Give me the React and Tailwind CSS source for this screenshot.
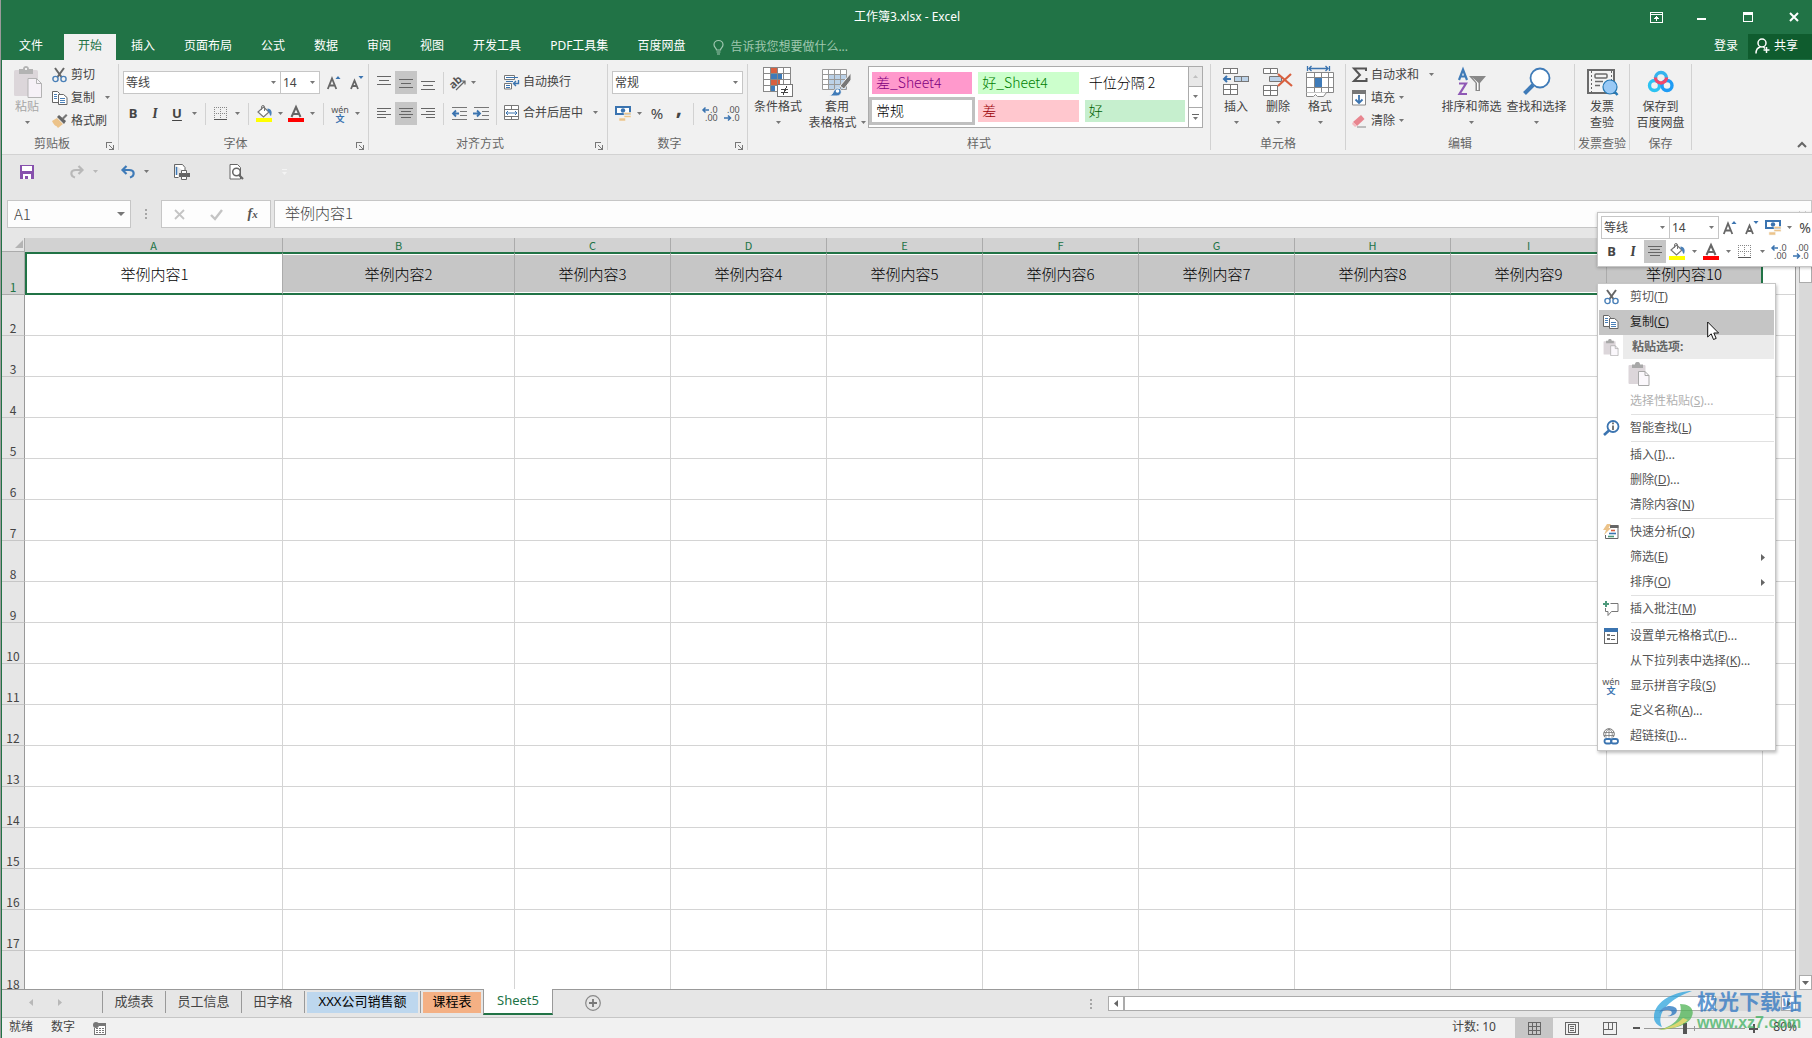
import { useState } from 'react';
import clsx from 'clsx';

/* ---------- icons ---------- */

const Svg = ({ w, h, crisp, className, children }) => (
  <svg
    width={w}
    height={h}
    viewBox={`0 0 ${w} ${h}`}
    fill="none"
    aria-hidden="true"
    shapeRendering={crisp ? 'crispEdges' : 'auto'}
    className={clsx('shrink-0 overflow-visible', className)}
  >
    {children}
  </svg>
);

const Caret = ({ className = 'fill-[#777]' }) => (
  <svg width="5" height="3" viewBox="0 0 5 3" aria-hidden="true" className={clsx('shrink-0', className)}>
    <path d="M0 0h5L2.500 3z" />
  </svg>
);

const PasteIcon = () => (
  <Svg w={29} h={32}>
    <rect x="1" y="4" width="24" height="26" rx="1.500" fill="#dcd6da" />
    <path d="M6 3h4c0-4 6-4 6 0h4v5H6z" fill="#b3b3b3" />
    <rect x="12" y="2" width="2" height="2" fill="#f1f1f1" />
    <path d="M15 12.500h8.500l5 5v14H15z" fill="#f6f1f7" stroke="#b3b3b3" />
    <path d="M23.500 12.500v5h5" stroke="#b3b3b3" />
  </Svg>
);

const SmallPasteIcon = ({ big }) => (
  <svg width={big ? 22 : 16} height={big ? 24 : 17} viewBox="0 0 22 24" fill="none" aria-hidden="true">
    <rect x="0.500" y="3" width="17" height="19" rx="1" fill="#dcd6da" />
    <path d="M4 2.500h3c0-3.500 5-3.500 5 0h3V6H4z" fill="#a8a8a8" />
    <path d="M10.500 9.500h6.500l4 4V23.500H10.500z" fill="#fbf8fc" stroke="#a8a8a8" />
    <path d="M17 9.500v4h4" stroke="#a8a8a8" />
  </svg>
);

const CutIcon = () => (
  <Svg w={15} h={16}>
    <path d="M3 1l6.500 9M12 1L5.500 10" stroke="#666" strokeWidth="2" />
    <circle cx="3.500" cy="12" r="2.600" stroke="#4a80b8" strokeWidth="1.400" />
    <circle cx="11.500" cy="12" r="2.600" stroke="#4a80b8" strokeWidth="1.400" />
  </Svg>
);

const CopyIcon = () => (
  <Svg w={16} h={16}>
    <path d="M.5 1.500h5l2 2v9h-7z" fill="#fff" stroke="#666" />
    <path d="M2 4.500h3M2 6.500h3M2 8.500h3" stroke="#4a80b8" />
    <path d="M6.500 4.500h5l3.500 3v7H6.500z" fill="#fff" stroke="#666" />
    <path d="M8 8.500h5M8 10.500h5M8 12.500h5" stroke="#4a80b8" />
  </Svg>
);

const BrushIcon = () => (
  <Svg w={16} h={16}>
    <path d="M0 8l5-3 6 6-5 4c-1-1-1-2-2-2S1 10 0 8z" fill="#ecc38a" />
    <path d="M5 4l2-2 7 6-2 3z" fill="#666" />
    <path d="M10 5l4-4 1.500 1.500-4 4z" fill="#777" />
  </Svg>
);

const GrowFont = ({ down }) => (
  <Svg w={14} h={16}>
    <path
      d={down ? 'M1 14L4.500 5.500L8 14M2.500 11h4.500' : 'M.8 14L5 3.500L9.300 14M2.500 10.500h5'}
      stroke="#666"
      strokeWidth="1.800"
    />
    <path d={down ? 'M8.500 1h5L11 4z' : 'M8.500 4h5L11 1z'} fill="#3b74b0" />
  </Svg>
);

const BordersIcon = () => (
  <Svg w={14} h={14} crisp>
    <path d="M0 .5h13M0 6.500h13M.5 0v12M6.500 0v12M12.500 0v12" stroke="#888" strokeDasharray="1 1" />
    <path d="M0 12.500h13" stroke="#555" />
  </Svg>
);

const FillIcon = () => (
  <Svg w={16} h={17}>
    <path d="M7.500 2L13 7l-5.500 5L2 7z" fill="#fff" stroke="#777" strokeWidth="1.200" />
    <path d="M5.500 5V2a1.500 1.500 0 013 0v4" stroke="#777" />
    <path d="M11.500 3.500c4 .5 5 3.500 3.500 7.500-2-1-1-4-3.500-5z" fill="#4a80b8" />
    <path d="M0 13h16v4H0z" fill="#ff0" />
  </Svg>
);

const FontColorIcon = () => (
  <Svg w={16} h={17}>
    <path d="M3.500 12L8 2l4.500 10M5 9h6" stroke="#666" strokeWidth="2" />
    <path d="M0 13h16v4H0z" fill="#f00" />
  </Svg>
);

const PinyinIcon = () => (
  <span className="flex flex-col items-center text-[9px] leading-[9px] text-[#555]">
    <span>wén</span>
    <span className="font-bold text-[#3b74b0]">文</span>
  </span>
);

const LINES = {
  top: [[0, 14, 1], [2, 12, 5], [0, 14, 9]],
  middle: [[0, 14, 4], [2, 12, 8], [0, 14, 12]],
  bottom: [[0, 14, 6], [2, 12, 10], [0, 14, 14]],
  left: [[0, 14, 2], [0, 9, 5], [0, 14, 8], [0, 9, 11]],
  center: [[0, 14, 2], [2, 12, 5], [0, 14, 8], [2, 12, 11]],
  right: [[0, 14, 2], [5, 14, 5], [0, 14, 8], [5, 14, 11]],
};

const AlignIcon = ({ kind }) => (
  <Svg w={14} h={16} crisp>
    {LINES[kind].map(([a, b, y]) => (
      <path key={y} d={`M${a} ${y + 0.5}H${b}`} stroke="#666" />
    ))}
  </Svg>
);

const IndentIcon = ({ out }) => (
  <Svg w={17} h={14}>
    <path d="M1 .5h15M9 4.500h7M9 8.500h7M1 12.500h15" stroke="#777" />
    <path d={out ? 'M2 6.500h6M5 3.500l-3 3 3 3' : 'M0 6.500h6M4 3.500l3 3-3 3'} stroke="#3b74b0" strokeWidth="1.800" />
  </Svg>
);

const OrientationIcon = () => (
  <Svg w={17} h={16}>
    <text x="0" y="11" transform="rotate(-42 6 9)" fontSize="11" fill="#555" fontWeight="bold">ab</text>
    <path d="M6 15l9-9M11.500 6H15v3.500" stroke="#666" strokeWidth="1.200" />
  </Svg>
);

const WrapIcon = () => (
  <Svg w={16} h={16}>
    <path d="M.5 1.500h10v4H.5zM.5 9.500h7v5.500H.5z" fill="#fff" stroke="#777" />
    <path d="M2 3.500h12M2 7.500h7M2 11.500h4M2 13.500h4" stroke="#3b74b0" />
    <path d="M14.500 6v3.500H10M12 7l-2.500 2.500L12 12" stroke="#3b74b0" strokeWidth="1.400" />
  </Svg>
);

const MergeIcon = () => (
  <Svg w={16} h={16}>
    <path d="M.5.500h14v14H.5zM.5 4.500h14M.5 11.500h14M7.500.500v4M7.500 11.500v3" fill="#fff" stroke="#777" />
    <path d="M2 8h11M4 6L2 8l2 2M11 6l2 2-2 2" stroke="#3b74b0" />
  </Svg>
);

const CurrencyIcon = () => (
  <Svg w={17} h={17}>
    <path d="M0 1h16v9H0z" fill="#3b74b0" />
    <path d="M2 3h12v5H2z" fill="#fff" />
    <circle cx="8" cy="5.500" r="2.200" fill="#3b74b0" />
    <path d="M9 7.500h7v2H9zM9 10.500h7v2H9zM4 13h6.500v3H4z" fill="#ecc38a" stroke="#f6f1ea" strokeWidth=".6" />
  </Svg>
);

const DecimalIcon = ({ dec }) => (
  <Svg w={16} h={16}>
    <text x={dec ? 3 : 8} y="7" fontSize="9" fill="#555">{dec ? '.00' : '.0'}</text>
    <text x={dec ? 8 : 3} y="15" fontSize="9" fill="#555">{dec ? '.0' : '.00'}</text>
    <path
      d={dec ? 'M0 12h6M4 9.500L6.500 12 4 14.500' : 'M1 4h6M3.500 1.500L1 4l2.500 2.500'}
      stroke="#3b74b0"
      strokeWidth="1.500"
    />
  </Svg>
);

const CondFormatIcon = () => (
  <Svg w={30} h={30} crisp>
    <path d="M.5.500h27v24H.5z" fill="#fff" />
    <path d="M8 1h6v5H8zM8 13h9v5H8z" fill="#d8603f" />
    <path d="M8 7h11v5H8zM8 19h4v5H8z" fill="#3f7bb8" />
    <path d="M.5.500h27v24H.5zM.5 6.500h27M.5 12.500h27M.5 18.500h27M7.500.500v24M14.500.500v24M20.500.500v24" stroke="#888" />
    <path d="M14.500 17.500h15v12h-15z" fill="#fff" stroke="#777" />
    <path d="M18 22.500h7M18 25.500h7M24 19l-4 9" stroke="#444" />
  </Svg>
);

const TableFormatIcon = () => (
  <Svg w={30} h={30}>
    <path d="M.5 2.500h24v20H.5z" fill="#fff" />
    <path d="M7 8h17v14H7z" fill="#bcd2e8" />
    <path d="M.5 2.500h24v20H.5zM.5 7.500h24M.5 12.500h24M.5 17.500h24M6.500 2.500v20M12.500 2.500v20M18.500 2.500v20" stroke="#999" />
    <path d="M29 6v7l-7 9-4-3z" fill="#777" stroke="#f1f1f1" />
    <path d="M7 29c5-1 4-8 9-8 5 1 4 8-1 8z" fill="#3f7bb8" stroke="#f1f1f1" />
    <circle cx="15.500" cy="24" r="1.800" fill="#fff" />
  </Svg>
);

const InsertCellsIcon = () => (
  <Svg w={28} h={30} crisp>
    <path d="M1.500 1.500h14v5h-14zM8.500 1.500v5M1.500 17.500h14v10h-14zM8.500 17.500v10M1.500 22.500h14" fill="#fff" stroke="#777" />
    <path d="M12.500 9.500h14v5h-14zM19.500 9.500v5" fill="#bcd2e8" stroke="#777" />
    <path d="M2 12h7M5 9l-3 3 3 3" stroke="#3b74b0" strokeWidth="2" shapeRendering="auto" />
  </Svg>
);

const DeleteCellsIcon = () => (
  <Svg w={30} h={30}>
    <path d="M.5 1.500h14v5H.5zM7.500 1.500v5M.5 18.500h14v10H.5zM7.500 18.500v10M.5 23.500h14" fill="#fff" stroke="#777" />
    <path d="M6.500 9.500h12v5h-12z" fill="#bcd2e8" stroke="#777" />
    <path d="M15 7l14 12M28 7L15 19" stroke="#d8603f" strokeWidth="2.200" />
  </Svg>
);

const FormatCellsIcon = () => (
  <Svg w={29} h={32}>
    <path d="M1.500 0v5M23.500 0v5M3 2.500h19M5.500 0L3 2.500 5.500 5M19.500 0L22 2.500 19.500 5" stroke="#3b74b0" strokeWidth="1.300" />
    <path d="M.5 6.500h27v20H.5zM.5 11.500h27M.5 21.500h27M8.500 6.500v20M15.500 6.500v20M22.500 6.500v20" fill="#fff" stroke="#888" />
    <path d="M9 12h7v9H9z" fill="#3f7bb8" />
    <path d="M.5 26.500v4h7l2-2 2 2h6l3-4" fill="#fff" stroke="#888" />
  </Svg>
);

const FillDownIcon = () => (
  <Svg w={14} h={16}>
    <path d="M.5 1h13v14H.5z" fill="#fff" stroke="#888" />
    <path d="M0 0h14v4H0z" fill="#777" />
    <path d="M7 5v8M3.500 9.500L7 13l3.500-3.500" stroke="#3b74b0" strokeWidth="1.800" />
  </Svg>
);

const SigmaIcon = () => (
  <Svg w={16} h={16}>
    <path d="M14 4V1.500H2l6 6.500-6 6h12.500V11" stroke="#555" strokeWidth="2" />
  </Svg>
);

const EraserIcon = () => (
  <Svg w={15} h={14}>
    <path d="M1 8l8-7 3.500 4L5 12z" fill="#e8858f" />
    <path d="M1 8l4 4-2 1L0 10z" fill="#f3b9bf" />
    <path d="M5 13h9" stroke="#888" />
  </Svg>
);

const SortIcon = () => (
  <Svg w={30} h={30}>
    <path d="M2 13L6 2.500 10 13M3.500 9.500h5" stroke="#3f7bb8" strokeWidth="2.200" />
    <path d="M2 16.500h7L2.500 27H10" stroke="#8f59b5" strokeWidth="2.200" />
    <path d="M12 9h17l-6 7v8h-4.500v-8z" fill="#888" />
    <path d="M15 10l5 6v7h1.500v-7z" fill="#fff" />
  </Svg>
);

const FindIcon = () => (
  <Svg w={30} h={30}>
    <circle cx="18" cy="11" r="9.500" fill="#fff" stroke="#3f7bb8" strokeWidth="1.800" />
    <path d="M11 18L2.500 26.500" stroke="#3f7bb8" strokeWidth="4" />
  </Svg>
);

const InvoiceIcon = () => (
  <Svg w={31} h={28}>
    <path d="M1 2h26v23H1z" fill="#f4f4f4" stroke="#6b6b6b" strokeWidth="2" />
    <path d="M4.500 3v22M24.500 3v10" stroke="#666" strokeDasharray="2 2" />
    <rect x="8" y="6" width="12" height="4" rx="1" stroke="#6b6b6b" strokeWidth="1.500" />
    <path d="M8 13.500h8M8 17.500h5" stroke="#6b6b6b" strokeWidth="1.500" />
    <path d="M27 23l3.500 4" stroke="#2478b5" strokeWidth="2.500" />
    <circle cx="23" cy="19" r="7" fill="#99c9f5" stroke="#2478b5" strokeWidth="1.200" />
  </Svg>
);

const NetdiskIcon = () => (
  <Svg w={28} h={24}>
    <circle cx="7.500" cy="15.500" r="5" stroke="#2cc3f2" strokeWidth="3.400" />
    <circle cx="20" cy="15.500" r="5" stroke="#1f9cf5" strokeWidth="3.400" />
    <path d="M8.500 8a5.500 5.500 0 0111 0" stroke="#35b4ee" strokeWidth="3.400" />
    <path d="M8.500 7.500a5.500 5.500 0 0011 0" stroke="#f2476a" strokeWidth="3.400" />
  </Svg>
);

const LauncherIcon = () => (
  <Svg w={8} h={8} crisp>
    <path d="M.5 6V.5H6M3 3l4 4M7.500 3v4.500H3" stroke="#777" />
  </Svg>
);

const LookupIcon = () => (
  <Svg w={17} h={16}>
    <circle cx="10" cy="6.500" r="5.500" fill="#fff" stroke="#3b74b0" strokeWidth="1.800" />
    <path d="M6 10.500L1 15" stroke="#3b74b0" strokeWidth="2.600" />
    <path d="M10 5.500v4.500M10 2.500v1.800" stroke="#555" strokeWidth="1.600" />
  </Svg>
);

const QuickIcon = () => (
  <Svg w={16} h={16}>
    <path d="M7 1.500h8v13H2.500V11" fill="#fff" stroke="#666" />
    <path d="M7 1h8.500v3H7z" fill="#666" />
    <path d="M4 0h4L5.500 4H8L1 11l2-5H0z" fill="#ecc38a" />
    <path d="M8 6.500h4" stroke="#d8603f" strokeWidth="1.600" />
    <path d="M6 9.500h7" stroke="#3b74b0" strokeWidth="1.600" />
    <path d="M5 12.500h6" stroke="#4e9a7c" strokeWidth="1.600" />
  </Svg>
);

const CommentIcon = () => (
  <Svg w={16} h={16}>
    <path d="M7.500 2.500H15v8H8.500l-3.500 4v-4H2.500V7" fill="#fff" stroke="#777" />
    <path d="M3 0v6M0 3h6" stroke="#4e9a7c" strokeWidth="2" />
  </Svg>
);

const FormatDialogIcon = () => (
  <Svg w={14} h={16} crisp>
    <path d="M.5.500h13v15H.5z" fill="#fff" stroke="#666" />
    <path d="M0 0h14v4H0z" fill="#3b74b0" />
    <path d="M3 6h3v2H3zM3 10h3v2H3z" fill="#777" />
    <path d="M7 7.500h4M7 11.500h4" stroke="#666" />
  </Svg>
);

const LinkIcon = () => (
  <Svg w={16} h={17}>
    <circle cx="6" cy="6" r="5.300" fill="#fff" stroke="#777" />
    <path d="M6 1v9M1 4.500h10M1 7.500h10M3.500 10c-1.500-3-1-7 2.500-9 3.500 2 4 6 2.500 9" stroke="#777" strokeWidth=".8" />
    <path d="M0 9.500h16V17H0z" fill="#fff" />
    <rect x="1.500" y="11" width="7" height="4.500" rx="2.200" stroke="#3b74b0" strokeWidth="1.800" />
    <rect x="8" y="11" width="7" height="4.500" rx="2.200" stroke="#3b74b0" strokeWidth="1.800" />
  </Svg>
);

/* ---------- small controls ---------- */

const IconButton = ({ label, className, children }) => (
  <button type="button" aria-label={label} className={clsx('flex h-[23px] shrink-0 items-center justify-center', className)}>
    {children}
  </button>
);

const CaretButton = ({ label, className = 'w-3' }) => (
  <IconButton label={`${label}选项`} className={className}>
    <Caret />
  </IconButton>
);

const Combo = ({ label, value, className }) => (
  <label className={clsx('flex h-[23px] shrink-0 items-center border border-[#c6c6c6] bg-white pr-1', className)}>
    <select aria-label={label} defaultValue={value} className="w-full min-w-0 appearance-none bg-transparent pl-0.5 text-[12px] text-[#444] outline-none">
      <option>{value}</option>
    </select>
    <Caret />
  </label>
);

const Sep = ({ className = 'mx-[5px] bg-[#d2d2d2]' }) => <span className={clsx('h-[22px] w-px shrink-0', className)} />;

const Group = ({ title, launcher, className, children }) => (
  <section className={clsx('flex h-[86px] shrink-0 flex-col border-r border-[#d2d2d2]', className)}>
    <div className="flex h-[69px]">{children}</div>
    <div className="flex h-[17px] items-start pt-1">
      <h2 className="flex-1 text-center text-[12px] leading-[13px] whitespace-nowrap text-[#666]">{title}</h2>
      {launcher && (
        <button type="button" aria-label={`${title}设置`} className="flex w-4 justify-center pt-[5px]">
          <LauncherIcon />
        </button>
      )}
    </div>
  </section>
);

const BigButton = ({ icon, lines, caret, className }) => (
  <button type="button" className={clsx('flex shrink-0 flex-col items-center text-[12px] leading-[15px] whitespace-nowrap', className)}>
    <span className="flex h-[35px] items-center justify-center">{icon}</span>
    <span>{lines[0]}</span>
    <span className="flex h-4 items-center gap-1">
      {lines[1]}
      {caret && <Caret />}
    </span>
  </button>
);

const SmallButton = ({ icon, caret, children }) => (
  <button type="button" className="flex h-[23px] items-center pb-0.5 text-[12px] whitespace-nowrap">
    <span className="flex w-[19px] justify-start">{icon}</span>
    {children}
    {caret && <span className={caret}><Caret /></span>}
  </button>
);

/* ---------- page sections ---------- */

const TABS = ['开始', '插入', '页面布局', '公式', '数据', '审阅', '视图', '开发工具', 'PDF工具集', '百度网盘'];

function TitleBar() {
  return (
    <header className="grid h-[34px] shrink-0 grid-cols-[1fr_auto_1fr] items-center bg-[#217346] text-white">
      <span />
      <h1 className="text-[12px]">工作簿3.xlsx - Excel</h1>
      <div className="flex justify-end gap-2.5">
        <button type="button" aria-label="功能区显示选项" className="flex h-8 w-9 items-center justify-center">
          <Svg w={13} h={11} crisp>
            <path d="M.5.500h12v10H.5zM.5 2.500h12M6.500 4v5M4 6.500h5M5 5.500h3" stroke="#fff" />
          </Svg>
        </button>
        <button type="button" aria-label="最小化" className="flex h-8 w-9 items-center justify-center">
          <Svg w={10} h={10} crisp><path d="M0 6h9v2H0z" fill="#fff" /></Svg>
        </button>
        <button type="button" aria-label="最大化" className="flex h-8 w-9 items-center justify-center">
          <Svg w={10} h={10} crisp><path d="M.5.500h9v9h-9zM0 2h10M0 1h10" stroke="#fff" /></Svg>
        </button>
        <button type="button" aria-label="关闭" className="flex h-8 w-9 items-center justify-center">
          <Svg w={10} h={10}><path d="M1 1l8 8M9 1L1 9" stroke="#fff" strokeWidth="2" /></Svg>
        </button>
      </div>
    </header>
  );
}

function TabBar() {
  return (
    <nav className="flex h-[26px] shrink-0 items-stretch bg-[#217346] text-[12px] text-white">
      <button type="button" className="w-[62px] pr-2 pb-0.5 pl-1">文件</button>
      <div className="flex gap-px">
        {TABS.map((tab, i) => (
          <button key={tab} type="button" className={clsx('px-3.5 pb-0.5 whitespace-nowrap', i === 0 && 'bg-[#f1f1f1] text-[#217346]')}>
            {tab}
          </button>
        ))}
      </div>
      <label className="ml-3.5 flex flex-1 items-center gap-1.5">
        <Svg w={11} h={15}>
          <path d="M3.500 10C3.500 8 1 7.500 1 4.700a4.500 4.200 0 019 0C10 7.500 7.500 8 7.500 10zM3.500 12h4M4 14h3" stroke="#9fc7af" strokeWidth="1.200" />
        </Svg>
        <input aria-label="操作说明搜索" placeholder="告诉我您想要做什么..." className="w-40 bg-transparent outline-none placeholder:text-[#9fc7af]" />
      </label>
      <button type="button" className="px-2.5 pb-0.5">登录</button>
      <button type="button" className="flex h-[25px] w-16 items-center gap-1 bg-[#0f5c2e] pb-0.5 pl-[7px]">
        <Svg w={15} h={16}>
          <circle cx="7" cy="5" r="4" stroke="#fff" strokeWidth="1.500" />
          <path d="M1 15.500c0-4 2-6 4.500-6.500M8.500 9l1.500 1.500M11.500 9v6M8.500 12h6" stroke="#fff" strokeWidth="1.500" />
        </Svg>
        共享
      </button>
    </nav>
  );
}

const STYLES = [
  { name: '差_Sheet4', cls: 'bg-[#ff99cc] text-[#800080]' },
  { name: '好_Sheet4', cls: 'bg-[#ccffcc] text-[#008000]' },
  { name: '千位分隔 2', cls: 'bg-white text-black' },
  { name: '常规', cls: 'bg-white text-black outline-3 outline-[#c0c0c0]' },
  { name: '差', cls: 'bg-[#ffc7ce] text-[#9c0006]' },
  { name: '好', cls: 'bg-[#c6efce] text-[#006100]' },
];

function Ribbon() {
  return (
    <div className="flex h-[95px] shrink-0 border-b border-[#d2d2d2] bg-[#f1f1f1] pt-1 text-[#444]">
      <Group title="剪贴板" launcher className="w-[117px]">
        <BigButton icon={<PasteIcon />} lines={[<span className="text-[#a6a6a6]">粘贴</span>, '']} caret className="w-[50px]" />
        <div>
          <SmallButton icon={<CutIcon />}>剪切</SmallButton>
          <SmallButton icon={<CopyIcon />} caret="ml-2.5">复制</SmallButton>
          <SmallButton icon={<BrushIcon />}>格式刷</SmallButton>
        </div>
      </Group>

      <Group title="字体" launcher className="w-[250px]">
        <div className="flex flex-col gap-2 pt-[7px] pl-[3px]">
          <div className="flex pl-px">
            <Combo label="字体" value="等线" className="w-[158px]" />
            <Combo label="字号" value="14" className="-ml-px w-10" />
            <IconButton label="增大字号" className="ml-0.5 w-[23px]"><GrowFont /></IconButton>
            <IconButton label="减小字号" className="w-[23px]"><GrowFont down /></IconButton>
          </div>
          <div className="flex items-center">
            <IconButton label="加粗" className="w-[22px] text-[13px] font-bold">B</IconButton>
            <IconButton label="倾斜" className="w-[22px] font-serif text-[14px] font-bold italic">I</IconButton>
            <IconButton label="下划线" className="w-[22px] text-[13px] font-bold underline underline-offset-2">U</IconButton>
            <CaretButton label="下划线" />
            <Sep />
            <IconButton label="边框" className="w-5"><BordersIcon /></IconButton>
            <CaretButton label="边框" />
            <Sep />
            <IconButton label="填充颜色" className="w-5"><FillIcon /></IconButton>
            <CaretButton label="填充颜色" />
            <IconButton label="字体颜色" className="w-5"><FontColorIcon /></IconButton>
            <CaretButton label="字体颜色" />
            <Sep />
            <IconButton label="拼音" className="w-[22px]"><PinyinIcon /></IconButton>
            <CaretButton label="拼音" />
          </div>
        </div>
      </Group>

      <Group title="对齐方式" launcher className="w-[239px]">
        <div className="flex flex-col gap-2 pt-[7px] pl-1">
          <div className="flex items-center">
            <IconButton label="顶端对齐" className="w-[22px]"><AlignIcon kind="top" /></IconButton>
            <IconButton label="垂直居中" className="w-[22px] bg-[#c6c6c6]"><AlignIcon kind="middle" /></IconButton>
            <IconButton label="底端对齐" className="w-[22px]"><AlignIcon kind="bottom" /></IconButton>
            <Sep className="mx-1 bg-[#d2d2d2]" />
            <IconButton label="方向" className="w-5"><OrientationIcon /></IconButton>
            <CaretButton label="方向" className="w-2.5" />
          </div>
          <div className="flex items-center">
            <IconButton label="左对齐" className="w-[22px]"><AlignIcon kind="left" /></IconButton>
            <IconButton label="居中" className="w-[22px] bg-[#c6c6c6]"><AlignIcon kind="center" /></IconButton>
            <IconButton label="右对齐" className="w-[22px]"><AlignIcon kind="right" /></IconButton>
            <Sep className="mx-1 bg-[#d2d2d2]" />
            <IconButton label="减少缩进量" className="w-[22px]"><IndentIcon out /></IconButton>
            <IconButton label="增加缩进量" className="w-[22px]"><IndentIcon /></IconButton>
          </div>
        </div>
        <span className="mt-1.5 ml-1 h-[55px] w-px bg-[#d2d2d2]" />
        <div className="flex flex-col gap-2 pt-[7px] pl-[7px]">
          <SmallButton icon={<WrapIcon />}>自动换行</SmallButton>
          <SmallButton icon={<MergeIcon />} caret="ml-2.5">合并后居中</SmallButton>
        </div>
      </Group>

      <Group title="数字" launcher className="w-[140px]">
        <div className="flex flex-col gap-2 pt-[7px] pl-1">
          <Combo label="数字格式" value="常规" className="w-[131px]" />
          <div className="flex items-center">
            <IconButton label="会计数字格式" className="w-[22px]"><CurrencyIcon /></IconButton>
            <CaretButton label="会计数字格式" className="w-2.5" />
            <IconButton label="百分比样式" className="w-[26px] text-[15px]">%</IconButton>
            <IconButton label="千位分隔样式" className="w-[18px] pb-3.5 text-[22px] font-bold">,</IconButton>
            <Sep />
            <IconButton label="增加小数位数" className="w-[22px]"><DecimalIcon /></IconButton>
            <IconButton label="减少小数位数" className="w-[22px]"><DecimalIcon dec /></IconButton>
          </div>
        </div>
      </Group>

      <Group title="样式" className="w-[463px]">
        <BigButton icon={<CondFormatIcon />} lines={['条件格式', '']} caret className="ml-[5px] w-[50px]" />
        <BigButton icon={<TableFormatIcon />} lines={['套用', '表格格式']} caret className="ml-[3px] w-[62px]" />
        <div className="mt-0.5 flex h-[62px] w-[335px] border border-[#ababab] bg-white">
          <div className="grid flex-1 grid-cols-3 content-start gap-1.5 px-[3px] pt-[5px]">
            {STYLES.map((s) => (
              <button key={s.name} type="button" className={clsx("h-[22px] px-1 pb-0.5 text-left font-['Noto_Sans_CJK_SC',sans-serif] text-[14px] leading-5 font-light whitespace-nowrap", s.cls)}>
                {s.name}
              </button>
            ))}
          </div>
          <div className="flex w-3.5 flex-col divide-y divide-[#ababab] border-l border-[#ababab]">
            <button type="button" aria-label="上一行" className="flex flex-1 items-center justify-center bg-[#e8e8e8]">
              <Caret className="rotate-180 fill-[#c0c0c0]" />
            </button>
            <button type="button" aria-label="下一行" className="flex flex-1 items-center justify-center"><Caret /></button>
            <button type="button" aria-label="其他样式" className="flex flex-1 flex-col items-center justify-center gap-0.5">
              <span className="h-px w-[7px] bg-[#666]" />
              <Caret />
            </button>
          </div>
        </div>
      </Group>

      <Group title="单元格" className="w-[135px]">
        <BigButton icon={<InsertCellsIcon />} lines={['插入', '']} caret className="ml-1 w-[42px]" />
        <BigButton icon={<DeleteCellsIcon />} lines={['删除', '']} caret className="w-[42px]" />
        <BigButton icon={<FormatCellsIcon />} lines={['格式', '']} caret className="w-[42px]" />
      </Group>

      <Group title="编辑" className="w-[229px]">
        <div className="ml-1.5 w-[87px]">
          <SmallButton icon={<SigmaIcon />} caret="ml-2.5">自动求和</SmallButton>
          <SmallButton icon={<FillDownIcon />} caret="ml-1">填充</SmallButton>
          <SmallButton icon={<EraserIcon />} caret="ml-1">清除</SmallButton>
        </div>
        <BigButton icon={<SortIcon />} lines={['排序和筛选', '']} caret className="w-[65px]" />
        <BigButton icon={<FindIcon />} lines={['查找和选择', '']} caret className="w-[65px]" />
      </Group>

      <Group title="发票查验" className="w-[55px]">
        <BigButton icon={<InvoiceIcon />} lines={['发票', '查验']} className="w-full" />
      </Group>

      <Group title="保存" className="w-[62px]">
        <BigButton icon={<NetdiskIcon />} lines={['保存到', '百度网盘']} className="w-full" />
      </Group>

      <div className="flex flex-1 items-end justify-end pr-[5px] pb-1.5">
        <button type="button" aria-label="折叠功能区">
          <Svg w={10} h={6}><path d="M1 5l4-4 4 4" stroke="#666" strokeWidth="2" /></Svg>
        </button>
      </div>
    </div>
  );
}

function QuickAccess() {
  return (
    <div className="flex h-[33px] shrink-0 items-center pl-[15px]">
      <IconButton label="保存" className="w-5">
        <Svg w={14} h={14} crisp>
          <path d="M0 0h14v14H0z" fill="#8751ad" />
          <path d="M2 1h10v5H2zM3 9h8v5H3z" fill="#fff" />
          <path d="M5 11h3v3H5z" fill="#8751ad" />
        </Svg>
      </IconButton>
      <IconButton label="恢复" className="ml-[30px] w-5">
        <Svg w={14} h={14}>
          <path d="M8.500 1l4 4-4 4M12 5H6C0 5 0 11 5 12.500" stroke="#b8b8b8" strokeWidth="2.200" />
        </Svg>
      </IconButton>
      <IconButton label="恢复选项" className="ml-0.5 w-3"><Caret className="fill-[#b8b8b8]" /></IconButton>
      <IconButton label="撤消" className="ml-[17px] w-5">
        <Svg w={14} h={14}>
          <path d="M5.500 1l-4 4 4 4M2 5h6c6 0 6 6 1 7.500" stroke="#3f7bb8" strokeWidth="2.200" />
        </Svg>
      </IconButton>
      <CaretButton label="撤消" className="ml-0.5 w-3" />
      <IconButton label="快速打印" className="ml-5 w-5">
        <Svg w={16} h={16}>
          <path d="M.5.500h8l2.500 3V8M.5.500v13h4" fill="#fff" stroke="#666" />
          <path d="M2.500 3v8" stroke="#3f7bb8" strokeWidth="1.500" />
          <path d="M5 9h11v4H5z" fill="#666" />
          <path d="M7.500 6.500h5v3h-5zM7.500 12.500h5v3h-5z" fill="#fff" stroke="#666" />
        </Svg>
      </IconButton>
      <IconButton label="打印预览" className="ml-[34px] w-5">
        <Svg w={15} h={16}>
          <path d="M1 .5h7.500l3 3V15H1z" fill="#fff" stroke="#666" />
          <circle cx="7.500" cy="8" r="3.800" fill="#fff" stroke="#666" strokeWidth="1.500" />
          <path d="M10 11l4 4" stroke="#666" strokeWidth="2.200" />
        </Svg>
      </IconButton>
      <IconButton label="自定义快速访问工具栏" className="ml-7 w-5">
        <span className="flex flex-col items-center gap-0.5">
          <span className="h-px w-[5px] bg-[#f4f4f4]" />
          <Caret className="fill-[#f4f4f4]" />
        </span>
      </IconButton>
    </div>
  );
}

function FormulaBar() {
  return (
    <div className="mt-3 flex h-7 shrink-0 pl-[5px] text-[#444]">
      <label className="flex w-[124px] items-center border border-[#c6c6c6] bg-[#fdfdfd] pr-[5px]">
        <input aria-label="名称框" defaultValue="A1" className="h-full w-full min-w-0 bg-transparent pb-0.5 pl-1.5 font-['Noto_Sans_CJK_SC',sans-serif] text-[15px] font-light outline-none" />
        <svg width="8" height="4" viewBox="0 0 8 4" className="shrink-0 fill-[#777]" aria-hidden="true"><path d="M0 0h8L4 4z" /></svg>
      </label>
      <span className="flex w-[30px] flex-col items-center justify-center gap-0.5">
        <span className="size-0.5 bg-[#a6a6a6]" />
        <span className="size-0.5 bg-[#a6a6a6]" />
        <span className="size-0.5 bg-[#a6a6a6]" />
      </span>
      <div className="flex w-[110px] items-center justify-around border border-[#c6c6c6] bg-[#fdfdfd]">
        <button type="button" aria-label="取消">
          <Svg w={11} h={11}><path d="M1 1l9 9M10 1l-9 9" stroke="#c4c4c4" strokeWidth="1.800" /></Svg>
        </button>
        <button type="button" aria-label="输入">
          <Svg w={13} h={11}><path d="M1 6l4 4 7-9" stroke="#c4c4c4" strokeWidth="2.400" /></Svg>
        </button>
        <button type="button" aria-label="插入函数" className="font-['Liberation_Serif',serif] text-[14px] leading-4 font-bold text-[#555] italic">
          f<span className="text-[11px]">x</span>
        </button>
      </div>
      <div className="ml-[3px] flex flex-1 border border-[#c6c6c6] bg-[#fdfdfd] pr-1">
        <input aria-label="编辑栏" defaultValue="举例内容1" className="flex-1 bg-transparent pb-0.5 pl-2.5 font-['Noto_Sans_CJK_SC',sans-serif] text-[15px] font-light outline-none" />
        <button type="button" aria-label="展开编辑栏">
          <Svg w={9} h={6}><path d="M1 1l3.500 4L8 1" stroke="#666" strokeWidth="1.500" /></Svg>
        </button>
      </div>
    </div>
  );
}

const COLUMNS = ['A', 'B', 'C', 'D', 'E', 'F', 'G', 'H', 'I', 'J'];
const ROWS = Array.from({ length: 17 }, (_, i) => i + 2);

function Sheet() {
  return (
    <div className="mt-2.5 flex min-h-0 flex-1">
      <div className="min-w-0 flex-1 overflow-hidden border-r border-b border-[#999] bg-white">
        <table className="w-full table-fixed border-separate border-spacing-0 font-['Noto_Sans_CJK_SC',sans-serif]">
          <colgroup>
            <col className="w-[23px]" />
            <col className="w-[258px]" />
            <col className="w-[232px]" />
            {COLUMNS.slice(2).map((c) => (
              <col key={c} className="w-[156px]" />
            ))}
            <col />
          </colgroup>
          <thead>
            <tr className="h-3.5 text-[11px] leading-[13px] text-[#217346]">
              <th className="border-r border-b border-[#ababab] bg-[#e6e6e6] p-0">
                <svg width="9" height="9" viewBox="0 0 9 9" className="ml-auto fill-[#b4b4b4]" aria-hidden="true"><path d="M8 0v8H0z" /></svg>
              </th>
              {COLUMNS.map((c) => (
                <th key={c} scope="col" className="border-r border-[#ababab] bg-[#d2d2d2] p-0 font-normal">{c}</th>
              ))}
              <th className="border-b border-[#ababab] bg-[#e6e6e6] p-0" />
            </tr>
          </thead>
          <tbody>
            <tr className="h-[43px] text-[15px] leading-5 text-black">
              <th scope="row" className="border-r border-b border-[#ababab] bg-[#d2d2d2] p-0 align-bottom text-[12px] leading-[15px] font-normal text-[#217346]">1</th>
              {COLUMNS.map((c, i) => (
                <td
                  key={c}
                  className={clsx(
                    'border-y-2 border-y-[#217346] p-0 text-center font-light shadow-[inset_0_1px_0_#fff,inset_0_-1px_0_#fff]',
                    i === 0 && 'border-r border-l-2 border-r-[#ababab] border-l-[#217346] bg-white',
                    i > 0 && 'bg-[#c6c6c6]',
                    i > 0 && i < 9 && 'border-r border-r-[#ababab]',
                    i === 9 && 'border-r-2 border-r-[#217346]',
                  )}
                >
                  举例内容{i + 1}
                </td>
              ))}
              <td className="border-b border-[#d4d4d4]" />
            </tr>
            {ROWS.map((r) => (
              <tr key={r} className="h-[41px]">
                <th scope="row" className="border-r border-b border-r-[#999] border-b-[#c6c6c6] bg-[#e6e6e6] p-0 align-bottom text-[12px] leading-[14px] font-normal text-[#444]">{r}</th>
                {COLUMNS.map((c) => (
                  <td key={c} className="border-r border-b border-[#d4d4d4] p-0" />
                ))}
                <td className="border-b border-[#d4d4d4] p-0" />
              </tr>
            ))}
          </tbody>
        </table>
      </div>
      <div className="ml-[3px] flex w-[13px] flex-col justify-between bg-[#d9d9d9]">
        <span className="h-[45px] border border-[#ababab] bg-white" />
        <button type="button" aria-label="向下滚动" className="flex h-[15px] items-center justify-center border border-[#ababab] bg-white">
          <svg width="7" height="4" viewBox="0 0 7 4" className="fill-[#666]" aria-hidden="true"><path d="M0 0h7L3.500 4z" /></svg>
        </button>
      </div>
    </div>
  );
}

const Triangle = ({ right, className }) => (
  <svg width="4" height="7" viewBox="0 0 4 7" aria-hidden="true" className={className}>
    <path d={right ? 'M0 0v7l4-3.500z' : 'M4 0v7L0 3.500z'} />
  </svg>
);

function SheetTabs() {
  return (
    <div className="flex h-[27px] shrink-0 text-[13px] text-[#444]">
      <div className="flex w-[100px] items-center gap-[25px] pb-0.5 pl-[27px]">
        <button type="button" aria-label="上一个工作表"><Triangle className="fill-[#b8b8b8]" /></button>
        <button type="button" aria-label="下一个工作表"><Triangle right className="fill-[#b8b8b8]" /></button>
      </div>
      <div className="flex h-6 items-center leading-5">
        <Sep className="bg-[#999]" />
        <button type="button" className="w-[62px] pb-0.5">成绩表</button>
        <Sep className="bg-[#999]" />
        <button type="button" className="w-[75px] pb-0.5">员工信息</button>
        <Sep className="bg-[#999]" />
        <button type="button" className="w-[62px] pb-0.5">田字格</button>
        <Sep className="bg-[#999]" />
        <button type="button" className="ml-0.5 flex h-[21px] w-[111px] items-center justify-center bg-[#bdd7ee] pb-0.5 text-black">XXX公司销售额</button>
        <Sep className="ml-0.5 bg-[#999]" />
        <button type="button" className="ml-0.5 flex h-[21px] w-[58px] items-center justify-center bg-[#f4b084] pb-0.5 text-black">课程表</button>
        <button type="button" className="-mt-px ml-0.5 h-[26px] w-[70px] self-start border-r border-b-2 border-l border-[#999] border-b-[#217346] bg-white pb-0.5 text-[#217346]">Sheet5</button>
      </div>
      <button type="button" aria-label="新工作表" className="ml-8 flex items-center pb-0.5">
        <Svg w={16} h={16}>
          <circle cx="8" cy="8" r="7.300" stroke="#888" strokeWidth="1.200" />
          <path d="M8 4v8M4 8h8" stroke="#777" strokeWidth="1.800" />
        </Svg>
      </button>
      <div className="flex-1" />
      <span className="mr-4 flex flex-col items-center justify-center gap-0.5">
        <span className="size-0.5 bg-[#a6a6a6]" />
        <span className="size-0.5 bg-[#a6a6a6]" />
        <span className="size-0.5 bg-[#a6a6a6]" />
      </span>
      <div className="mt-1.5 mr-4 flex h-[15px] w-[38%] bg-[#d9d9d9]">
        <button type="button" aria-label="向左滚动" className="flex w-4 shrink-0 items-center justify-center border border-[#ababab] bg-white"><Triangle className="fill-[#666]" /></button>
        <span className="w-[86%] border border-[#ababab] bg-white" />
        <span className="flex-1" />
        <button type="button" aria-label="向右滚动" className="flex w-[15px] shrink-0 items-center justify-center border border-[#ababab] bg-white"><Triangle right className="fill-[#666]" /></button>
      </div>
    </div>
  );
}

function StatusBar() {
  const [zoom, setZoom] = useState(40);
  return (
    <footer className="flex h-[21px] shrink-0 items-center border-t border-[#c6c6c6] bg-[#f1f1f1] text-[12px] text-[#444]">
      <span className="ml-[7px] pb-0.5">就绪</span>
      <span className="mx-[18px] pb-0.5">数字</span>
      <button type="button" aria-label="录制宏">
        <Svg w={13} h={13} crisp>
          <path d="M5 1.500h7.500v11H1.500V6" fill="#fff" stroke="#777" />
          <path d="M6 1h7v3H6z" fill="#777" />
          <path d="M3 6.500h8M3 8.500h8M3 10.500h8" stroke="#777" strokeDasharray="2 1" />
          <circle cx="3" cy="3" r="3" fill="#777" shapeRendering="auto" />
        </Svg>
      </button>
      <span className="flex-1" />
      <span className="mr-[19px] pb-0.5">计数: 10</span>
      <button type="button" aria-label="普通" className="flex h-5 w-[38px] items-center justify-center bg-[#c6c6c6]">
        <Svg w={13} h={13} crisp><path d="M.5.500h12v12H.5zM4.500.500v12M8.500.500v12M.5 4.500h12M.5 8.500h12" stroke="#666" /></Svg>
      </button>
      <button type="button" aria-label="页面布局" className="flex h-5 w-[38px] items-center justify-center">
        <Svg w={14} h={13} crisp><path d="M.5.500h13v12H.5zM3.500 2.500h7v8h-7zM5 4.500h4M5 6.500h4M5 8.500h4" stroke="#666" /></Svg>
      </button>
      <button type="button" aria-label="分页预览" className="flex h-5 w-[38px] items-center justify-center">
        <Svg w={14} h={13} crisp><path d="M.5.500h13v12H.5zM5.500.500v7M9.500.500v7M1 7.500h9" stroke="#666" /></Svg>
      </button>
      <button type="button" aria-label="缩小" className="ml-1 h-0.5 w-[7px] bg-[#555]" />
      <input
        type="range"
        aria-label="显示比例"
        min="0"
        max="100"
        value={zoom}
        onChange={(e) => setZoom(e.target.value)}
        className="mx-1 h-[13px] w-[101px] appearance-none bg-[linear-gradient(#999,#999),linear-gradient(#999,#999)] bg-[length:100%_1px,1px_5px] bg-center bg-no-repeat [&::-webkit-slider-thumb]:h-[11px] [&::-webkit-slider-thumb]:w-1 [&::-webkit-slider-thumb]:appearance-none [&::-webkit-slider-thumb]:bg-[#555]"
      />
      <button type="button" aria-label="放大">
        <Svg w={9} h={9} crisp><path d="M0 4.500h9M4.500 0v9" stroke="#555" strokeWidth="2" /></Svg>
      </button>
      <span className="w-[54px] pr-[15px] pb-0.5 text-right">80%</span>
    </footer>
  );
}

/* ---------- floating layers ---------- */

function MiniToolbar() {
  return (
    <div className="absolute top-[212px] left-[1597px] w-[232px] border border-[#c6c6c6] bg-white py-[3px] pl-[3px] text-[#444] shadow-[0_1px_3px_rgba(0,0,0,0.25)]">
      <div className="flex">
        <Combo label="浮动字体" value="等线" className="w-[69px]" />
        <Combo label="浮动字号" value="14" className="-ml-px w-[50px]" />
        <IconButton label="增大字号" className="w-[22px]"><GrowFont /></IconButton>
        <IconButton label="减小字号" className="w-[22px]"><GrowFont down /></IconButton>
        <IconButton label="会计数字格式" className="w-5"><CurrencyIcon /></IconButton>
        <CaretButton label="会计数字格式" />
        <IconButton label="百分比样式" className="ml-0.5 w-4 text-[14px]">%</IconButton>
      </div>
      <div className="mt-px flex items-center">
        <IconButton label="加粗" className="w-[21px] text-[13px] font-bold">B</IconButton>
        <IconButton label="倾斜" className="w-[22px] font-serif text-[14px] font-bold italic">I</IconButton>
        <IconButton label="居中" className="w-[22px] bg-[#c6c6c6]"><AlignIcon kind="center" /></IconButton>
        <IconButton label="填充颜色" className="w-[22px]"><FillIcon /></IconButton>
        <CaretButton label="填充颜色" />
        <IconButton label="字体颜色" className="w-[22px]"><FontColorIcon /></IconButton>
        <CaretButton label="字体颜色" />
        <IconButton label="边框" className="w-[22px]"><BordersIcon /></IconButton>
        <CaretButton label="边框" />
        <IconButton label="增加小数位数" className="w-[22px]"><DecimalIcon /></IconButton>
        <IconButton label="减少小数位数" className="w-[22px]"><DecimalIcon dec /></IconButton>
      </div>
    </div>
  );
}

const MENU = [
  { text: '剪切', key: 'T', icon: <CutIcon /> },
  { text: '复制', key: 'C', icon: <CopyIcon />, active: true },
  { heading: '粘贴选项:' },
  { paste: true },
  { text: '选择性粘贴', key: 'S', dots: true, disabled: true },
  { line: true },
  { text: '智能查找', key: 'L', icon: <LookupIcon /> },
  { line: true },
  { text: '插入', key: 'I', dots: true },
  { text: '删除', key: 'D', dots: true },
  { text: '清除内容', key: 'N' },
  { line: true },
  { text: '快速分析', key: 'Q', icon: <QuickIcon /> },
  { text: '筛选', key: 'E', sub: true },
  { text: '排序', key: 'O', sub: true },
  { line: true },
  { text: '插入批注', key: 'M', icon: <CommentIcon /> },
  { line: true },
  { text: '设置单元格格式', key: 'F', dots: true, icon: <FormatDialogIcon /> },
  { text: '从下拉列表中选择', key: 'K', dots: true },
  { text: '显示拼音字段', key: 'S', icon: <PinyinIcon /> },
  { text: '定义名称', key: 'A', dots: true },
  { text: '超链接', key: 'I', dots: true, icon: <LinkIcon /> },
];

function MenuRow({ item }) {
  if (item.line) return <div className="ml-8 h-0.5 border-t border-[#e1e1e1]" />;
  if (item.heading) {
    return (
      <div className="flex h-6">
        <span className="flex w-6 items-center justify-center"><SmallPasteIcon /></span>
        <span className="flex flex-1 items-center bg-[#ebebeb] pl-[9px] text-[12px] font-bold text-[#666]">{item.heading}</span>
      </div>
    );
  }
  if (item.paste) {
    return (
      <button type="button" aria-label="粘贴" className="flex h-[30px] items-center pl-[29px]">
        <SmallPasteIcon big />
      </button>
    );
  }
  return (
    <button
      type="button"
      disabled={item.disabled}
      className={clsx(
        'flex h-[25px] w-full items-center pb-px text-left text-[12px] whitespace-nowrap',
        item.active ? 'bg-[#c5c5c5] text-[#222]' : item.disabled ? 'text-[#b1b1b1]' : 'text-[#555]',
      )}
    >
      <span className="flex w-6 shrink-0 justify-center">{item.icon}</span>
      <span className="flex-1 pl-[7px]">
        {item.text}(<u>{item.key}</u>){item.dots && '...'}
      </span>
      {item.sub && <Triangle right className="mr-[9px] fill-[#666]" />}
    </button>
  );
}

function ContextMenu() {
  return (
    <div className="absolute top-[283px] left-[1597px] w-[179px] border border-[#c6c6c6] bg-white p-px shadow-[1px_2px_3px_rgba(0,0,0,0.25)]">
      {MENU.map((item, i) => (
        <MenuRow key={i} item={item} />
      ))}
    </div>
  );
}

function Watermark() {
  return (
    <div className="pointer-events-none absolute right-2.5 bottom-1.5 flex items-center gap-px opacity-75">
      <Svg w={44} h={42}>
        <path d="M40 2C24 2 1 12 2 29c0 4 4 8 8 9C4 26 14 11 40 2z" fill="#2ba3dd" />
        <path d="M7 24c3-7 12-9 17-5 3 4-2 9-9 8 4 0 6-3 4-5-3-2-8-1-12 2z" fill="#2273bf" />
        <path d="M28 15c9 0 15 5 12 12-3 9-17 13-34 14 14-3 26-12 22-26z" fill="#4fb455" />
        <path d="M36 31c-6 6-16 9-30 10 10-2 19-6 25-12z" fill="#d5cf48" />
      </Svg>
      <div className="whitespace-nowrap">
        <div className="font-['Noto_Sans_CJK_SC',sans-serif] text-[21px] leading-[27px] font-bold text-[#2d76c2]">极光下载站</div>
        <div className="font-['Liberation_Sans',sans-serif] text-[16px] leading-[18px] font-bold text-[#3fb060]">www.xz7.com</div>
      </div>
    </div>
  );
}

export default function App() {
  return (
    <div className="relative h-screen overflow-hidden bg-[#9a9a9a] pl-px font-['Noto_Sans','Noto_Sans_CJK_SC',sans-serif]">
      <div className="flex h-full flex-col border-l border-[#217346] bg-[#e6e6e6]">
        <TitleBar />
        <TabBar />
        <Ribbon />
        <QuickAccess />
        <FormulaBar />
        <Sheet />
        <SheetTabs />
        <StatusBar />
      </div>
      <MiniToolbar />
      <ContextMenu />
      <svg width="13" height="20" viewBox="0 0 13 20" aria-hidden="true" className="absolute top-[321px] left-[1707px]">
        <path d="M.7 1v15l3.500-3.200L6.500 18.500l2.700-1.100-2.400-5.400h4.800z" fill="#fff" stroke="#111" />
      </svg>
      <Watermark />
    </div>
  );
}
